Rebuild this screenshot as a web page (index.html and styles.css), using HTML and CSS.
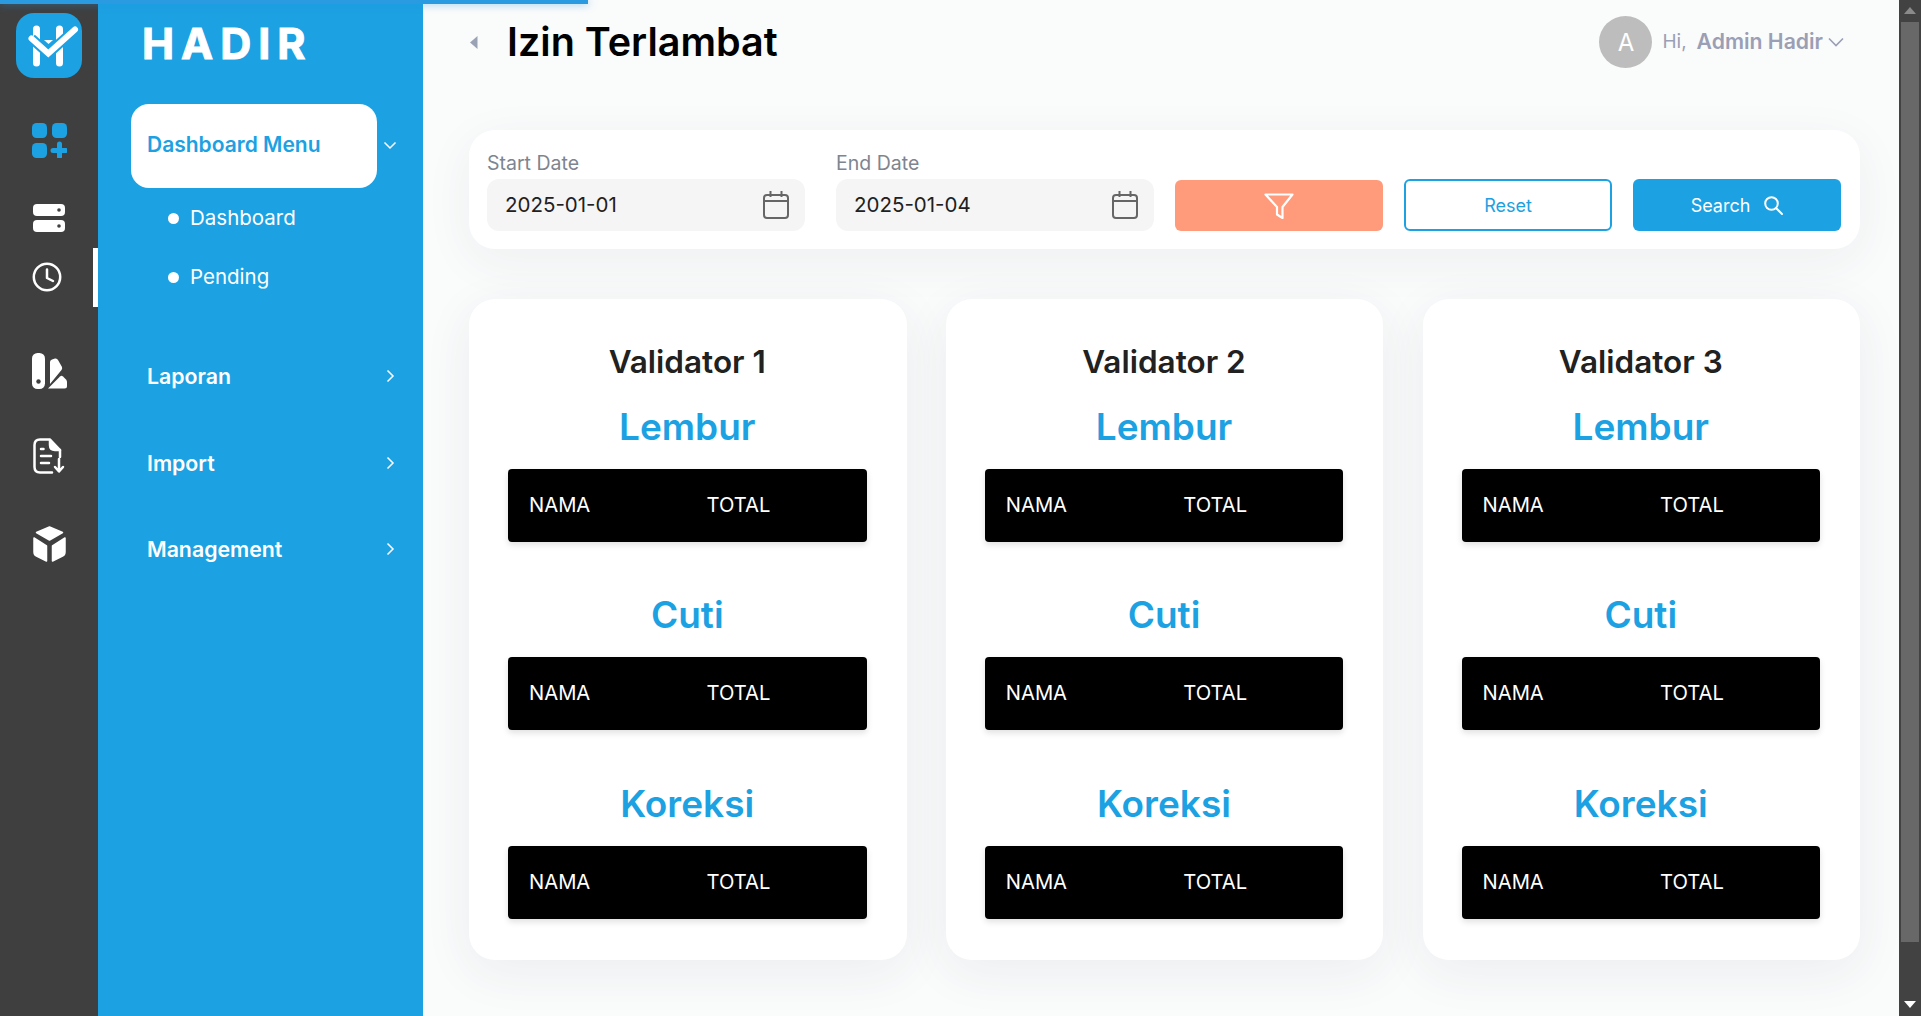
FILE: index.html
```html
<!DOCTYPE html>
<html lang="id">
<head>
    <meta charset="UTF-8">
    <meta name="viewport" content="width=device-width, initial-scale=1.0">
    <title>Izin Terlambat</title>
    <link rel="stylesheet" href="styles.css">
</head>
<body>
    <div class="progress"></div>

    <div class="shell">
        <!-- icon rail -->
        <nav class="rail">
            <svg class="logo" viewBox="0 0 66 65">
                <rect width="66" height="65" rx="18" fill="#1ca1e2"/>
                <path d="M20.500 16V50M43.500 16V50" stroke="#fff" stroke-width="7" stroke-linecap="round"/>
                <path d="M28 27H37L32.500 31Z" fill="#fff"/>
                <path d="M15.500 25.500L32.300 40.500L59 16.500" fill="none" stroke="#1ca1e2" stroke-width="10"/>
                <path d="M15.500 25.500L32.300 40.500L59 16.500" fill="none" stroke="#fff" stroke-width="6" stroke-linecap="round"/>
            </svg>
            <svg class="rail-icon icon-grid" width="35" height="35" viewBox="0 0 35 35" fill="#1ca1e2">
                <rect width="15" height="15" rx="4.500"/>
                <rect x="20" width="15" height="15" rx="4.500"/>
                <rect y="20" width="15" height="15" rx="4.500"/>
                <path d="M27.500 21V34M21 27.500H34" stroke="#1ca1e2" stroke-width="5" stroke-linecap="round"/>
            </svg>
            <svg class="rail-icon icon-server" width="32" height="28" viewBox="0 0 32 28" fill="#fff">
                <rect width="32" height="12" rx="4"/>
                <rect y="16" width="32" height="12" rx="4"/>
                <circle cx="26" cy="6" r="1.800" fill="#3f3f3f"/>
                <circle cx="26" cy="22" r="1.800" fill="#3f3f3f"/>
            </svg>
            <div class="rail-active">
                <svg width="30" height="30" viewBox="0 0 30 30" fill="none" stroke="#fff" stroke-width="2.500">
                    <circle cx="15" cy="15" r="13.200"/>
                    <path d="M15 7.500V16L21 19" stroke-linecap="round" stroke-linejoin="round"/>
                </svg>
            </div>
            <svg class="rail-icon icon-swatch" width="35" height="36" viewBox="0 0 35 36" fill="#fff">
                <rect width="13" height="36" rx="5.500"/>
                <circle cx="6.500" cy="28.500" r="2.200" fill="#3f3f3f"/>
                <path d="M18 9Q18 7 20 6.500L23 5.500Q25 5 26 7L30 14Q30.500 16 29.500 17L18 31Z"/>
                <path d="M16 35.500L28 23.500Q29.500 22 31 23.500L34 26.500Q35 27.500 35 29V33Q35 35.500 32.500 35.500Z"/>
            </svg>
            <svg class="rail-icon icon-doc" width="32" height="36" viewBox="0 0 32 36" fill="none" stroke="#fff" stroke-width="2.500" stroke-linecap="round" stroke-linejoin="round">
                <path d="M27 19V12L17 1.500H7Q1.500 1.500 1.500 7V29Q1.500 34.500 7 34.500H19"/>
                <path d="M17 2V7Q17 12 22 12H27" fill="#fff"/>
                <path d="M8 11H10.500M8 18H18M8 25H16"/>
                <path d="M26 21V33M22 29L26 33.500L30 29"/>
            </svg>
            <svg class="rail-icon icon-box" width="33" height="36" viewBox="0 0 33 36" fill="#fff" stroke="#fff" stroke-width="1.500" stroke-linejoin="round">
                <path d="M16.500 1L29.500 6.500L16.500 14L3.500 6.500Z"/>
                <path d="M1 12L13.500 20V35L3.500 30Q1 29 1 26Z"/>
                <path d="M32 12L19.500 20V35L29.500 30Q32 29 32 26Z"/>
            </svg>
        </nav>

        <!-- menu -->
        <aside class="sidebar">
            <div class="brand">HADIR</div>
            <div class="menu-row">
                <a class="menu-card">Dashboard Menu</a>
                <svg class="chevron" width="14" height="14" viewBox="0 0 14 14"><path d="M1.500 4.500L7 10L12.500 4.500"/></svg>
            </div>
            <ul class="submenu">
                <li>Dashboard</li>
                <li>Pending</li>
            </ul>
            <div class="menu-list">
                <a class="menu-item">Laporan <svg class="chevron" width="14" height="14" viewBox="0 0 14 14"><path d="M4.500 1.500L10 7L4.500 12.500"/></svg></a>
                <a class="menu-item">Import <svg class="chevron" width="14" height="14" viewBox="0 0 14 14"><path d="M4.500 1.500L10 7L4.500 12.500"/></svg></a>
                <a class="menu-item">Management <svg class="chevron" width="14" height="14" viewBox="0 0 14 14"><path d="M4.500 1.500L10 7L4.500 12.500"/></svg></a>
            </div>
        </aside>

        <main class="content">
            <header class="topbar">
                <svg class="back" width="8" height="13" viewBox="0 0 8 13"><path d="M7.500 0V13L0 6.500Z"/></svg>
                <h1>Izin Terlambat</h1>
                <div class="user">
                    <span class="avatar">A</span>
                    <span class="hi">Hi,</span>
                    <strong>Admin Hadir</strong>
                    <svg width="16" height="10" viewBox="0 0 16 10"><path d="M1 1.500L8 8.500L15 1.500" fill="none" stroke="#9a9fb5" stroke-width="1.600"/></svg>
                </div>
            </header>

            <section class="filter">
                <div class="field">
                    <label>Start Date</label>
                    <div class="date-input">
                        <span>2025-01-01</span>
                        <svg width="26" height="28" viewBox="0 0 26 28" fill="none" stroke="#666" stroke-width="2"><rect x="1" y="4" width="24" height="23" rx="3"/><path d="M1 10H25M7.500 0V6M18.500 0V6"/></svg>
                    </div>
                </div>
                <div class="field">
                    <label>End Date</label>
                    <div class="date-input">
                        <span>2025-01-04</span>
                        <svg width="26" height="28" viewBox="0 0 26 28" fill="none" stroke="#666" stroke-width="2"><rect x="1" y="4" width="24" height="23" rx="3"/><path d="M1 10H25M7.500 0V6M18.500 0V6"/></svg>
                    </div>
                </div>
                <button class="btn btn-filter">
                    <svg width="30" height="26" viewBox="0 0 30 26" fill="none" stroke="#fff" stroke-width="2.200" stroke-linejoin="round"><path d="M1.500 1.500H28.500L18.500 14V25L13 21.500V14Z"/></svg>
                </button>
                <button class="btn btn-reset">Reset</button>
                <button class="btn btn-search">Search
                    <svg width="19" height="19" viewBox="0 0 19 19" fill="none" stroke="#fff" stroke-width="2" stroke-linecap="round"><circle cx="7.500" cy="7.500" r="6.300"/><path d="M12 12L18 18"/></svg>
                </button>
            </section>

            <section class="cards">
                <article class="card">
                    <h2>Validator 1</h2>
                    <h3>Lembur</h3>
                    <div class="table-wrap"><table><tr><th>NAMA</th><th>TOTAL</th></tr></table></div>
                    <h3>Cuti</h3>
                    <div class="table-wrap"><table><tr><th>NAMA</th><th>TOTAL</th></tr></table></div>
                    <h3 class="last">Koreksi</h3>
                    <div class="table-wrap"><table><tr><th>NAMA</th><th>TOTAL</th></tr></table></div>
                </article>
                <article class="card">
                    <h2>Validator 2</h2>
                    <h3>Lembur</h3>
                    <div class="table-wrap"><table><tr><th>NAMA</th><th>TOTAL</th></tr></table></div>
                    <h3>Cuti</h3>
                    <div class="table-wrap"><table><tr><th>NAMA</th><th>TOTAL</th></tr></table></div>
                    <h3 class="last">Koreksi</h3>
                    <div class="table-wrap"><table><tr><th>NAMA</th><th>TOTAL</th></tr></table></div>
                </article>
                <article class="card">
                    <h2>Validator 3</h2>
                    <h3>Lembur</h3>
                    <div class="table-wrap"><table><tr><th>NAMA</th><th>TOTAL</th></tr></table></div>
                    <h3>Cuti</h3>
                    <div class="table-wrap"><table><tr><th>NAMA</th><th>TOTAL</th></tr></table></div>
                    <h3 class="last">Koreksi</h3>
                    <div class="table-wrap"><table><tr><th>NAMA</th><th>TOTAL</th></tr></table></div>
                </article>
            </section>
        </main>

        <div class="scrollbar">
            <svg width="12" height="7" viewBox="0 0 12 7"><path d="M6 0L12 7H0Z" fill="#8a8a8a"/></svg>
            <div class="scroll-track"><div class="scroll-thumb"></div></div>
            <svg width="12" height="7" viewBox="0 0 12 7"><path d="M0 0H12L6 7Z" fill="#fff"/></svg>
        </div>
    </div>
</body>
</html>
```

FILE: styles.css
```css
* {
    box-sizing: border-box;
}
html, body {
    height: 100%;
}
body {
    margin: 0;
    overflow: hidden;
    font-family: Inter, "Liberation Sans", sans-serif;
    background: #fafbfb;
}
h1, h2, h3, ul {
    margin: 0;
    padding: 0;
}
.progress {
    position: fixed;
    top: 0;
    left: 0;
    width: 588px;
    height: 4px;
    background: #2a9be0;
    box-shadow: 0 0 8px rgba(34, 150, 225, .6);
    z-index: 5;
}
.shell {
    display: flex;
    height: 100%;
}

/* rail */
.rail {
    width: 98px;
    flex: none;
    background: #3f3f3f;
    display: flex;
    flex-direction: column;
    align-items: center;
    padding-top: 13px;
}
.logo {
    width: 66px;
    height: 65px;
    margin-left: -1px;
}
.rail-icon {
    display: block;
}
.icon-grid {
    margin-top: 45px;
}
.icon-server {
    margin-top: 46px;
    margin-left: -1px;
}
.icon-swatch {
    margin-top: 46px;
}
.icon-doc {
    margin-top: 49px;
}
.icon-box {
    margin-top: 52px;
}
.rail-active {
    width: 100%;
    height: 59px;
    margin-top: 16px;
    border-right: 5px solid #fff;
    display: flex;
    align-items: center;
    justify-content: center;
}
.rail-active svg {
    margin: -2px 0 0 1px;
}

/* sidebar */
.sidebar {
    width: 325px;
    flex: none;
    background: #1ca1e2;
    color: #fff;
}
.brand {
    height: 104px;
    padding: 15px 0 0 44px;
    font-size: 43px;
    line-height: 56px;
    font-weight: 700;
    letter-spacing: 7px;
    -webkit-text-stroke: 1px #fff;
}
.menu-row {
    display: flex;
    align-items: center;
    padding-left: 33px;
}
.menu-card {
    width: 246px;
    height: 84px;
    background: #fff;
    color: #1ca1e2;
    border-radius: 18px;
    padding-left: 16px;
    font-size: 21px;
    font-weight: 600;
    line-height: 82px;
}
.menu-row .chevron {
    margin: -2px 0 0 6px;
}
.chevron {
    fill: none;
    stroke: #fff;
    stroke-width: 1.500;
}
.submenu {
    list-style: none;
}
.submenu li {
    height: 59px;
    line-height: 60px;
    padding-left: 92px;
    font-size: 20.500px;
    position: relative;
}
.submenu li::before {
    content: "";
    position: absolute;
    left: 70px;
    top: 25px;
    width: 11px;
    height: 11px;
    border-radius: 50%;
    background: #fff;
}
.menu-list {
    margin-top: 27px;
}
.menu-item {
    height: 86.500px;
    padding: 0 26px 0 49px;
    display: flex;
    align-items: center;
    justify-content: space-between;
    font-size: 21.300px;
    font-weight: 600;
}

/* content */
.content {
    flex: 1;
    min-width: 0;
    padding: 16px 39px 0 46px;
}
.topbar {
    height: 52px;
    display: flex;
    align-items: center;
}
.back {
    fill: #9aa3b5;
    margin-right: 29px;
    margin-left: 1px;
}
.topbar h1 {
    font-size: 39.500px;
    font-weight: 600;
    color: #000;
}
.user {
    margin-left: auto;
    margin-right: 16px;
    display: flex;
    align-items: center;
    color: #9a9fb5;
    font-size: 21.200px;
}
.avatar {
    width: 53px;
    height: 52px;
    border-radius: 50%;
    background: #bdbdbd;
    color: #fff;
    font-size: 24px;
    display: flex;
    align-items: center;
    justify-content: center;
    margin-right: 10px;
}
.hi {
    font-size: 19px;
    padding-bottom: 2px;
}
.user strong {
    font-weight: 600;
    margin: 0 5px 0 10px;
    padding-bottom: 2px;
}

.filter {
    margin-top: 62px;
    height: 119px;
    padding: 22px 19px 18px 18px;
    background: #fff;
    border-radius: 26px;
    box-shadow: 0 12px 50px rgba(40, 60, 80, .06);
    display: flex;
    align-items: flex-end;
}
.field {
    margin-right: 31px;
}
.field + .field {
    margin-right: 21px;
}
.field label {
    display: block;
    font-size: 19.500px;
    line-height: 23px;
    margin-bottom: 4px;
    color: #7d8590;
}
.date-input {
    width: 318px;
    height: 52px;
    padding: 0 16px 0 18px;
    background: #f5f5f5;
    border-radius: 12px;
    display: flex;
    align-items: center;
    justify-content: space-between;
    font-size: 20.500px;
    color: #212121;
}
.date-input span {
    padding-bottom: 1px;
}
.btn {
    width: 208px;
    height: 52px;
    border: 0;
    border-radius: 6px;
    margin-right: 21px;
    font-family: inherit;
    font-size: 18px;
    display: flex;
    align-items: center;
    justify-content: center;
}
.btn:last-child {
    margin-right: 0;
}
.btn-filter {
    background: #ff9b7b;
    height: 51px;
}
.btn-reset {
    background: #fff;
    border: 2px solid #1ca1e2;
    color: #1ca1e2;
}
.btn-search {
    background: #1ca1e2;
    color: #fff;
    gap: 14px;
}

.cards {
    margin-top: 50px;
    display: grid;
    grid-template-columns: repeat(3, 1fr);
    gap: 39.250px;
}
.card {
    height: 661px;
    padding: 43px 40px 0 39px;
    background: #fff;
    border-radius: 26px;
    box-shadow: 0 12px 50px rgba(40, 60, 80, .07);
    text-align: center;
}
.card h2 {
    font-size: 31.500px;
    line-height: 40px;
    font-weight: 600;
    color: #212121;
    margin-bottom: 20px;
}
.card h3 {
    font-size: 37px;
    line-height: 50px;
    font-weight: 600;
    color: #1ca1e2;
    margin-bottom: 17px;
}
.card h3.last {
    padding-top: 1px;
}
.table-wrap {
    background: #000;
    border-radius: 4px;
    height: 73px;
    margin-bottom: 48px;
    box-shadow: 0 3px 6px rgba(0, 0, 0, .12);
}
table {
    width: 100%;
    border-collapse: collapse;
}
th {
    height: 71px;
    padding-left: 21px;
    text-align: left;
    font-size: 20.200px;
    font-weight: 400;
    color: #fff;
}
th:first-child {
    width: 49.500%;
}

/* scrollbar */
.scrollbar {
    width: 22px;
    flex: none;
    background: #424242;
    display: flex;
    flex-direction: column;
    align-items: center;
    padding: 7px 0 8px;
}
.scroll-track {
    flex: 1;
    width: 100%;
    padding: 8px 2px 0;
}
.scroll-thumb {
    height: 920px;
    background: #686868;
}
```
